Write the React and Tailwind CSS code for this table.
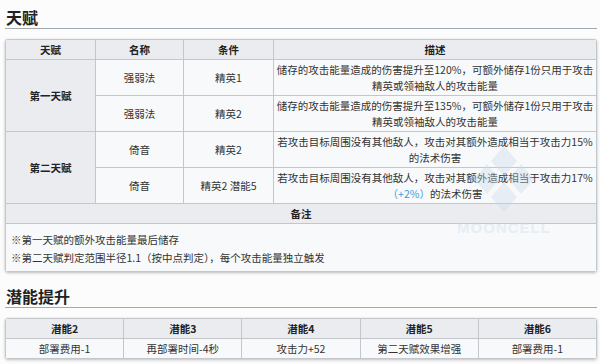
import React from "react";

const cell = "border border-[#c3c7cc] bg-[#f8f9fa] text-center align-middle p-0";
const head = "border border-[#c3c7cc] bg-[#eaecf0] text-center align-middle font-bold text-[#222] p-0";

function Watermark() {
  return (
    <div className="pointer-events-none absolute left-[452px] top-[144px] flex w-[104px] flex-col items-center opacity-35">
      <svg width="64" height="70" viewBox="0 0 64 70">
        <g fill="#c6d9ee">
          <polygon points="32,2 45,17 32,32 19,17" />
          <polygon points="15,20 28,35 15,50 2,35" />
          <polygon points="49,20 62,35 49,50 36,35" />
          <polygon points="32,38 45,53 32,68 19,53" />
        </g>
      </svg>
      <div className="mt-[6px] text-[15px] font-bold leading-[16px] tracking-[1px] text-[#c6d9ee] font-['Liberation_Sans',sans-serif]">
        MOONCELL
      </div>
    </div>
  );
}

export default function App() {
  return (
    <div className="relative min-h-[364px] w-[600px] overflow-hidden bg-[#fcfcfc] pl-[5px] pr-[3px] pt-[6px] font-['Noto_Sans_CJK_SC','Noto_Sans',sans-serif] text-[10.5px] text-[#333]">
      <h2 className="border-b border-[#a2a9b1] pl-[1px] text-[16px] font-bold leading-[22px] text-[#222]">
        天赋
      </h2>

      <div className="mt-[10px] overflow-hidden rounded-[3px] shadow-[0_1px_3px_rgba(0,0,0,0.25)]">
        <table className="w-full table-fixed border-collapse leading-[16px]">
          <colgroup>
            <col className="w-[90px]" />
            <col className="w-[88px]" />
            <col className="w-[90px]" />
            <col />
          </colgroup>
          <tbody>
            <tr className="h-[20px]">
              <th className={head}>天赋</th>
              <th className={head}>名称</th>
              <th className={head}>条件</th>
              <th className={head}>描述</th>
            </tr>
            <tr className="h-[36px]">
              <th rowSpan={2} className={head}>第一天赋</th>
              <td className={cell}>强弱法</td>
              <td className={cell}>精英1</td>
              <td className={cell}>
                <span className="block whitespace-nowrap">储存的攻击能量造成的伤害提升至120%，可额外储存1份只用于攻击</span>
                <span className="block whitespace-nowrap">精英或领袖敌人的攻击能量</span>
              </td>
            </tr>
            <tr className="h-[36px]">
              <td className={cell}>强弱法</td>
              <td className={cell}>精英2</td>
              <td className={cell}>
                <span className="block whitespace-nowrap">储存的攻击能量造成的伤害提升至135%，可额外储存1份只用于攻击</span>
                <span className="block whitespace-nowrap">精英或领袖敌人的攻击能量</span>
              </td>
            </tr>
            <tr className="h-[36px]">
              <th rowSpan={2} className={head}>第二天赋</th>
              <td className={cell}>倚音</td>
              <td className={cell}>精英2</td>
              <td className={cell}>
                <span className="block whitespace-nowrap">若攻击目标周围没有其他敌人，攻击对其额外造成相当于攻击力15%</span>
                <span className="block whitespace-nowrap">的法术伤害</span>
              </td>
            </tr>
            <tr className="h-[36px]">
              <td className={cell}>倚音</td>
              <td className={cell}>精英2 潜能5</td>
              <td className={cell}>
                <span className="block whitespace-nowrap">若攻击目标周围没有其他敌人，攻击对其额外造成相当于攻击力17%</span>
                <span className="block whitespace-nowrap">
                  <span className="text-[#3c9de3]">（+2%）</span>的法术伤害
                </span>
              </td>
            </tr>
            <tr className="h-[20px]">
              <th colSpan={4} className={head}>备注</th>
            </tr>
            <tr className="h-[47px]">
              <td colSpan={4} className="border border-[#c3c7cc] bg-[#f8f9fa] px-[5px] pb-[4px] pt-[7px] text-left align-top leading-[18px]">
                <div>※第一天赋的额外攻击能量最后储存</div>
                <div>※第二天赋判定范围半径1.1（按中点判定），每个攻击能量独立触发</div>
              </td>
            </tr>
          </tbody>
        </table>
      </div>

      <h2 className="mt-[13px] border-b border-[#a2a9b1] pl-[1px] text-[16px] font-bold leading-[22px] text-[#222]">
        潜能提升
      </h2>

      <div className="mt-[10px] overflow-hidden rounded-[3px] shadow-[0_1px_3px_rgba(0,0,0,0.25)]">
        <table className="w-full table-fixed border-collapse leading-[16px]">
          <tbody>
            <tr className="h-[20px]">
              <th className={head}>潜能2</th>
              <th className={head}>潜能3</th>
              <th className={head}>潜能4</th>
              <th className={head}>潜能5</th>
              <th className={head}>潜能6</th>
            </tr>
            <tr className="h-[20px]">
              <td className={cell}>部署费用-1</td>
              <td className={cell}>再部署时间-4秒</td>
              <td className={cell}>攻击力+52</td>
              <td className={cell}>第二天赋效果增强</td>
              <td className={cell}>部署费用-1</td>
            </tr>
          </tbody>
        </table>
      </div>

      <Watermark />
    </div>
  );
}
